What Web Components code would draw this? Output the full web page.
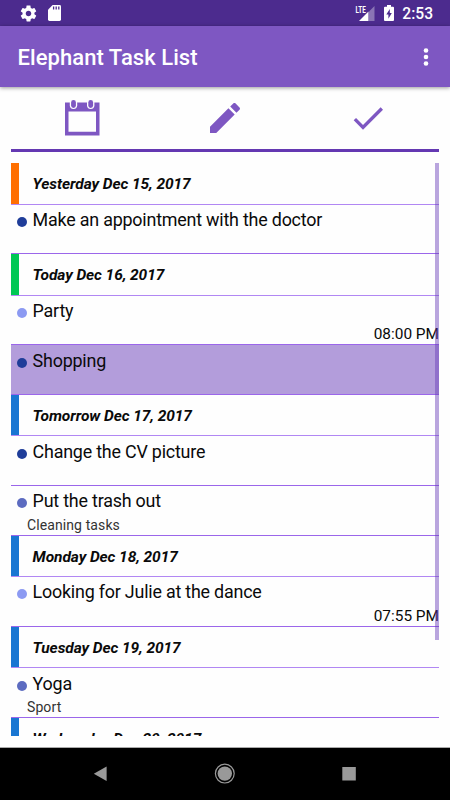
<!DOCTYPE html>
<html lang="en">
<head>
<meta charset="UTF-8">
<meta name="viewport" content="width=device-width, initial-scale=1.0">
<title>Elephant Task List</title>
<style>
  html, body {
    margin: 0;
    height: 100%;
  }
  body {
    font-family: Roboto, sans-serif;
    color: #0a0a0a;
    overflow: hidden;
  }
</style>
</head>
<body>
<task-app>
  <status-bar slot="top" time="2:53"></status-bar>
  <app-bar slot="top">Elephant Task List</app-bar>
  <task-toolbar slot="top"></task-toolbar>

  <task-list>
    <day-header color="#ff6f00">Yesterday Dec 15, 2017</day-header>
    <task-item color="#1f3d99">Make an appointment with the doctor</task-item>
    <day-header color="#00c853">Today Dec 16, 2017</day-header>
    <task-item color="#8c9af2">Party<span slot="time">08:00 PM</span></task-item>
    <task-item color="#1f3d99" selected>Shopping</task-item>
    <day-header color="#1976d2">Tomorrow Dec 17, 2017</day-header>
    <task-item color="#1f3d99">Change the CV picture</task-item>
    <task-item color="#5c6bc0">Put the trash out<span slot="category">Cleaning tasks</span></task-item>
    <day-header color="#1976d2">Monday Dec 18, 2017</day-header>
    <task-item color="#8c9af2">Looking for Julie at the dance<span slot="time">07:55 PM</span></task-item>
    <day-header color="#1976d2">Tuesday Dec 19, 2017</day-header>
    <task-item color="#5c6bc0">Yoga<span slot="category">Sport</span></task-item>
    <day-header color="#1976d2">Wednesday Dec 20, 2017</day-header>
  </task-list>

  <nav-bar slot="bottom"></nav-bar>
</task-app>

<script>
class TaskApp extends HTMLElement {
  constructor() {
    super();
    this.attachShadow({ mode: 'open' });
    this.shadowRoot.innerHTML = `
      <style>
        :host {
          display: flex;
          flex-direction: column;
          height: 100vh;
          background: #fefefe;
        }
        main {
          flex: 1;
          min-height: 0;
          display: flex;
          padding: 11px 11px;
        }
      </style>
      <slot name="top"></slot>
      <main><slot></slot></main>
      <slot name="bottom"></slot>`;
  }
}
customElements.define('task-app', TaskApp);

class StatusBar extends HTMLElement {
  constructor() {
    super();
    this.attachShadow({ mode: 'open' });
    this.shadowRoot.innerHTML = `
      <style>
        :host {
          display: flex;
          align-items: center;
          height: 26px;
          flex: none;
          box-sizing: border-box;
          padding: 0 17px 0 19px;
          background: #4c2b8e;
          color: white;
        }
        svg { display: block; flex: none; }
        .cog { width: 19px; height: 19px; }
        .card { width: 13px; height: 16px; margin-left: 10px; }
        .espaco { flex: 1; }
        .signal { width: 20px; height: 16px; margin-right: 9px; }
        .battery { width: 10px; height: 16px; margin-right: 8px; }
        .time { font-size: 15.6px; font-weight: 500; line-height: 26px; padding-top: 2px; }
      </style>
      <svg class="cog" viewBox="0 0 24 24" fill="#fff"><path d="M19.43 12.98c.04-.32.07-.64.07-.98s-.03-.66-.07-.98l2.11-1.65c.19-.15.24-.42.12-.64l-2-3.46c-.12-.22-.39-.3-.61-.22l-2.49 1c-.52-.4-1.08-.73-1.69-.98l-.38-2.65C14.46 2.18 14.25 2 14 2h-4c-.25 0-.46.18-.49.42l-.38 2.65c-.61.25-1.17.59-1.69.98l-2.49-1c-.23-.09-.49 0-.61.22l-2 3.46c-.13.22-.07.49.12.64l2.11 1.65c-.04.32-.07.65-.07.98s.03.66.07.98l-2.11 1.65c-.19.15-.24.42-.12.64l2 3.46c.12.22.39.3.61.22l2.49-1c.52.4 1.08.73 1.69.98l.38 2.65c.03.24.24.42.49.42h4c.25 0 .46-.18.49-.42l.38-2.65c.61-.25 1.17-.59 1.69-.98l2.49 1c.23.09.49 0 .61-.22l2-3.46c.12-.22.07-.49-.12-.64l-2.11-1.65zM12 15.500c-1.930 0-3.500-1.570-3.500-3.500s1.570-3.500 3.500-3.500 3.500 1.570 3.500 3.500-1.570 3.500-3.500 3.500z"/></svg>
      <svg class="card" viewBox="0 0 13 16"><path fill="#fff" d="M4.6 0H11.6Q13 0 13 1.4V14.6Q13 16 11.6 16H1.4Q0 16 0 14.6V4.8Z"/><path stroke="#4c2b8e" stroke-width="1.3" d="M5.6 1.6V4.6M8.2 1.6V4.6M10.8 1.6V4.6"/></svg>
      <span class="espaco"></span>
      <svg class="signal" viewBox="0 0 20 16">
        <path fill="#fff" fill-opacity=".35" d="M14 6.5L19.5 1V16H14Z"/>
        <path fill="#fff" d="M4 16L13.5 6.5V16Z"/>
        <text x="0.6" y="7.6" fill="#fff" font-family="Roboto" font-size="9.6" font-weight="700" textLength="10.2" lengthAdjust="spacingAndGlyphs">LTE</text>
      </svg>
      <svg class="battery" viewBox="0 0 10 16"><path fill="#fff" d="M3 0H7V1.7H9Q10 1.7 10 2.7V15Q10 16 9 16H1Q0 16 0 15V2.7Q0 1.7 1 1.7H3Z"/><path fill="#4c2b8e" d="M5.8 4L2.3 9.6H4.4V13.7L7.8 8.1H5.8Z"/></svg>
      <span class="time"></span>`;
    this.shadowRoot.querySelector('.time').textContent = this.getAttribute('time');
  }
}
customElements.define('status-bar', StatusBar);

class AppBar extends HTMLElement {
  constructor() {
    super();
    this.attachShadow({ mode: 'open' });
    this.shadowRoot.innerHTML = `
      <style>
        :host {
          display: flex;
          align-items: center;
          justify-content: space-between;
          height: 61px;
          flex: none;
          box-sizing: border-box;
          padding: 2px 21px 0 17.5px;
          background: #7e57c2;
          box-shadow: 0 1px 4px rgba(0,0,0,0.4);
          color: white;
          font-size: 22px;
          font-weight: 500;
          letter-spacing: 0.06px;
        }
        svg { display: block; width: 6px; height: 20px; }
      </style>
      <span><slot></slot></span>
      <svg viewBox="0 0 6 20" fill="#fff"><circle cx="3" cy="2.5" r="2.3"/><circle cx="3" cy="9" r="2.3"/><circle cx="3" cy="15.5" r="2.3"/></svg>`;
  }
}
customElements.define('app-bar', AppBar);

class TaskToolbar extends HTMLElement {
  constructor() {
    super();
    this.attachShadow({ mode: 'open' });
    this.shadowRoot.innerHTML = `
      <style>
        :host {
          display: grid;
          grid-template-columns: repeat(3, 1fr);
          align-items: center;
          justify-items: center;
          height: 65px;
          flex: none;
          box-sizing: border-box;
          margin: 0 11px;
          border-bottom: 3px solid #6438b2;
        }
        svg { display: block; width: 40px; height: 40px; }
      </style>
      <svg viewBox="0 0 40 40">
        <path fill="#7e57c2" fill-rule="evenodd" d="M3 4.500H37.500V37.500H3ZM6.500 13.500V33.700H34V13.500Z"/>
        <rect x="7.800" y="1" width="7.400" height="10" rx="3.700" fill="#fefefe"/>
        <rect x="25" y="1" width="7.400" height="10" rx="3.700" fill="#fefefe"/>
        <rect x="9.100" y="2.100" width="4.800" height="7.800" rx="2.400" fill="#7e57c2"/>
        <rect x="26.300" y="2.100" width="4.800" height="7.800" rx="2.400" fill="#7e57c2"/>
      </svg>
      <svg viewBox="0 0 24 24" fill="#7e57c2"><path d="M3 17.250V21h3.750L17.810 9.940l-3.750-3.750L3 17.250zM20.710 7.040c.39-.39.39-1.020 0-1.410l-2.340-2.340c-.39-.39-1.020-.39-1.410 0l-1.830 1.830 3.750 3.750 1.830-1.830z"/></svg>
      <svg viewBox="0 0 24 24" fill="#7e57c2"><path d="M9 16.170L4.830 12l-1.420 1.410L9 19 21 7l-1.410-1.410z"/></svg>`;
  }
}
customElements.define('task-toolbar', TaskToolbar);

class TaskList extends HTMLElement {
  constructor() {
    super();
    this.attachShadow({ mode: 'open' });
    this.shadowRoot.innerHTML = `
      <style>
        :host {
          display: block;
          position: relative;
          flex: 1;
          overflow: hidden;
        }
        /* scroll thumb drawn over the rows */
        .thumb {
          position: absolute;
          top: 0;
          right: 0;
          width: 4.5px;
          height: 476.5px;
          background: rgba(103,58,183,0.45);
        }
      </style>
      <slot></slot>
      <div class="thumb"></div>`;
  }
}
customElements.define('task-list', TaskList);

class DayHeader extends HTMLElement {
  constructor() {
    super();
    this.attachShadow({ mode: 'open' });
    this.shadowRoot.innerHTML = `
      <style>
        :host {
          display: flex;
          align-items: center;
          height: 41.5px;
          box-sizing: border-box;
          border-bottom: 1px solid #b187f3;
          font-size: 15.5px;
          font-weight: 700;
          font-style: italic;
          letter-spacing: -0.08px;
        }
        .tag {
          align-self: stretch;
          width: 8px;
          margin-right: 13.6px;
        }
        .label { padding-top: 2px; }
      </style>
      <div class="tag"></div>
      <div class="label"><slot></slot></div>`;
    this.shadowRoot.querySelector('.tag').style.background = this.getAttribute('color');
  }
}
customElements.define('day-header', DayHeader);

class TaskItem extends HTMLElement {
  constructor() {
    super();
    this.attachShadow({ mode: 'open' });
    this.shadowRoot.innerHTML = `
      <style>
        :host {
          display: flex;
          flex-direction: column;
          height: 49.65px;
          box-sizing: border-box;
          border-bottom: 1px solid #9b66ea;
        }
        :host([selected]) { background: #b39ddb; }
        .title {
          display: flex;
          align-items: center;
          height: 29.5px;
          font-size: 17.9px;
          letter-spacing: -0.21px;
        }
        .dot {
          width: 10px;
          height: 10px;
          border-radius: 50%;
          margin: 5px 6px 0 5.6px;
        }
        .details {
          display: flex;
          justify-content: space-between;
          align-items: center;
          padding-left: 16px;
          height: 17.6px;
        }
        ::slotted([slot=category]) { font-size: 14px; letter-spacing: 0.1px; color: #333; }
        ::slotted([slot=time]) { font-size: 15.4px; }
      </style>
      <div class="title"><span class="dot"></span><span><slot></slot></span></div>
      <div class="details">
        <div><slot name="category"></slot></div>
        <div><slot name="time"></slot></div>
      </div>`;
    this.shadowRoot.querySelector('.dot').style.background = this.getAttribute('color');
  }
}
customElements.define('task-item', TaskItem);

class NavBar extends HTMLElement {
  constructor() {
    super();
    this.attachShadow({ mode: 'open' });
    this.shadowRoot.innerHTML = `
      <style>
        :host {
          display: flex;
          justify-content: space-between;
          align-items: center;
          height: 53px;
          flex: none;
          box-sizing: border-box;
          padding: 0 90px;
          border-top: 1px solid #aaa;
          background: black;
        }
        svg { display: block; width: 22px; height: 22px; }
      </style>
      <svg viewBox="0 0 22 22" fill="#999"><path d="M3.8 10.8L16.6 3.5V18.1Z"/></svg>
      <svg viewBox="0 0 22 22"><circle cx="10.8" cy="10.6" r="9.4" fill="none" stroke="#999" stroke-width="1.2"/><circle cx="10.8" cy="10.6" r="7.2" fill="#999"/></svg>
      <svg viewBox="0 0 22 22"><rect x="4.3" y="4" width="13.5" height="13.5" fill="#999"/></svg>`;
  }
}
customElements.define('nav-bar', NavBar);
</script>
</body>
</html>
